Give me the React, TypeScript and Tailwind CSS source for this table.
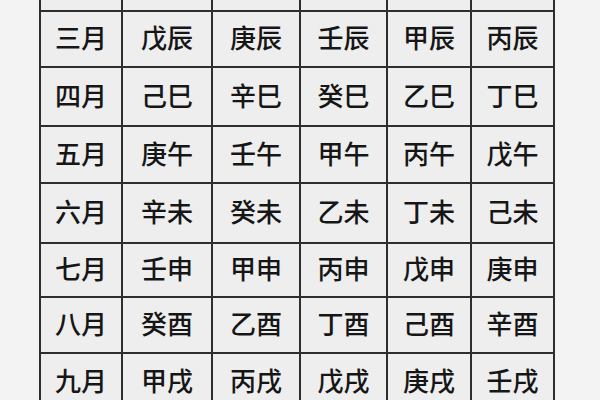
const cols = ['w-[82px]', 'w-[90px]', 'w-[88px]', 'w-[87px]', 'w-[84px]', 'w-[83px]'];

const rows: { h: string; cells: string[] }[] = [
  { h: 'h-[56px]', cells: ['', '', '', '', '', ''] },
  { h: 'h-[56px]', cells: ['三月', '戊辰', '庚辰', '壬辰', '甲辰', '丙辰'] },
  { h: 'h-[59px]', cells: ['四月', '己巳', '辛巳', '癸巳', '乙巳', '丁巳'] },
  { h: 'h-[57px]', cells: ['五月', '庚午', '壬午', '甲午', '丙午', '戊午'] },
  { h: 'h-[60px]', cells: ['六月', '辛未', '癸未', '乙未', '丁未', '己未'] },
  { h: 'h-[54px]', cells: ['七月', '壬申', '甲申', '丙申', '戊申', '庚申'] },
  { h: 'h-[56px]', cells: ['八月', '癸酉', '乙酉', '丁酉', '己酉', '辛酉'] },
  { h: 'h-[58px]', cells: ['九月', '甲戌', '丙戌', '戊戌', '庚戌', '壬戌'] },
];

export default function App() {
  return (
    <div className="w-[600px] h-[400px] overflow-hidden bg-[#f3f3f3] font-['Noto_Sans_CJK_SC',sans-serif]">
      <div className="ml-[39px] mt-[-46px] w-fit border-l-2 border-t-2 border-[#2e2e2e] bg-[#eeeeee]">
        {rows.map((r, i) => (
          <div key={i} className={`flex ${r.h}`}>
            {r.cells.map((c, j) => (
              <div
                key={j}
                className={`${cols[j]} flex items-center justify-center pb-[4px] border-r-2 border-b-2 border-[#2e2e2e] text-[26px] font-medium text-[#161616] leading-none`}
              >
                {c}
              </div>
            ))}
          </div>
        ))}
      </div>
    </div>
  );
}
